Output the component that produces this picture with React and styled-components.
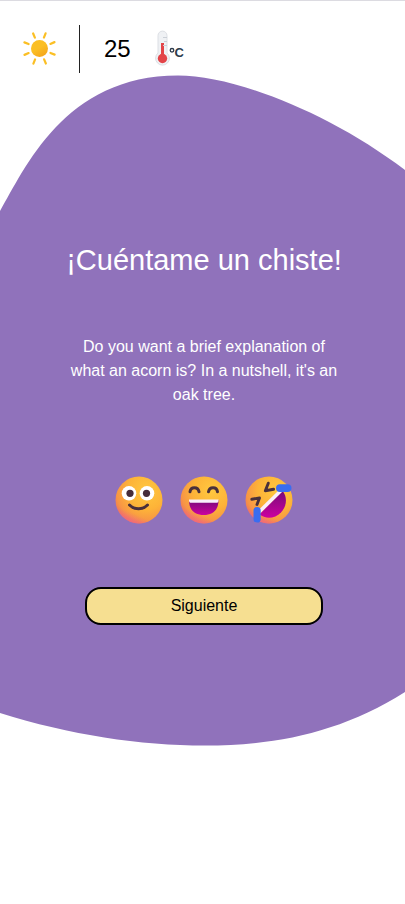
import React from "react";
import styled, { createGlobalStyle } from "styled-components";

const GlobalStyle = createGlobalStyle`
  *, *::before, *::after { box-sizing: border-box; }
  body {
    margin: 0;
    background: #fff;
    color: #000;
    font-family: "Liberation Sans", Arial, sans-serif;
    font-size: 16px;
    line-height: 24px;
  }
`;

const Page = styled.div`
  position: relative;
  min-height: 100vh;
  overflow: hidden;
  border-top: 1px solid #dcdbe1;
`;

const Blob = styled.svg`
  position: absolute;
  z-index: -1;
  top: 74px;
  left: 0;
  width: 100%;
  height: 671px;
`;

const Weather = styled.header`
  display: flex;
  align-items: center;
  height: 48px;
  margin-top: 24px;
  padding-left: 20px;
`;

const SunIcon = styled.svg`
  width: 40px;
  height: 40px;
`;

const Temperature = styled.p`
  display: flex;
  align-items: center;
  height: 100%;
  margin: 0 0 0 19px;
  padding-left: 24px;
  border-left: 1px solid #222;
  font-size: 24px;
`;

const ThermometerIcon = styled.svg`
  width: 40px;
  height: 40px;
  margin-left: 20px;
`;

const Degrees = styled.text`
  fill: #2c3b4d;
  font: bold 13px "Liberation Sans", Arial, sans-serif;
`;

const Joke = styled.main`
  display: flex;
  flex-direction: column;
  align-items: center;
  padding: 169px 64px 0 67px;
  text-align: center;
`;

const Title = styled.h1`
  margin: 0;
  color: #fff;
  font-size: 29px;
  font-weight: 400;
  line-height: 36px;
  white-space: nowrap;
`;

const JokeText = styled.p`
  margin: 57px 0 0;
  color: #fff;
  max-width: 272px;
`;

const Scores = styled.div`
  display: flex;
  gap: 17px;
  margin-top: 69px;
`;

const ScoreButton = styled.button`
  width: 48px;
  height: 48px;
  padding: 0;
  border: 0;
  background: none;
  cursor: pointer;

  svg { display: block; width: 100%; height: 100%; }
`;

const NextButton = styled.button`
  width: 238px;
  max-width: 100%;
  height: 38px;
  margin-top: 63px;
  padding: 0;
  border: 2px solid #000;
  border-radius: 16px;
  background: #f6df91;
  color: #000;
  font: inherit;
  cursor: pointer;
`;

const rays = [22, 67, 112, 157, 202, 247, 292, 337];

function Sun() {
  return (
    <SunIcon viewBox="0 0 40 40" role="img" aria-label="Soleado">
      <defs>
        <linearGradient id="sunFill" x1="0.2" y1="0" x2="0.8" y2="1">
          <stop offset="0.45" stopColor="#fbbf24" />
          <stop offset="1" stopColor="#f4a41a" />
        </linearGradient>
      </defs>
      <circle cx="19.5" cy="19.5" r="8.5" fill="url(#sunFill)" />
      <g stroke="#fbbf24" strokeWidth="2.2" strokeLinecap="round">
        {rays.map((angle) => (
          <path key={angle} d="M19.5 7.7V3.2" transform={`rotate(${angle} 19.5 19.5)`} />
        ))}
      </g>
    </SunIcon>
  );
}

function Thermometer() {
  return (
    <ThermometerIcon viewBox="0 0 40 40" role="img" aria-label="Grados Celsius">
      <path
        d="M7 24V6.600a4.500 4.500 0 0 1 9 0V24a6.900 6.900 0 1 1-9 0Z"
        fill="#eff1f4"
        stroke="#dcdfe4"
      />
      <circle cx="11.5" cy="29.5" r="4.7" fill="#e34448" />
      <path d="M11.5 14v15" stroke="#e34448" strokeWidth="3" />
      <path d="M12 8.500h4M13 12.500h3M12 16.500h4" stroke="#cbd0d7" />
      <circle cx="21" cy="21.300" r="1.8" fill="none" stroke="#2c3b4d" strokeWidth="1.3" />
      <Degrees x="23.500" y="27.500">C</Degrees>
    </ThermometerIcon>
  );
}

function Face({ id, children }) {
  return (
    <svg viewBox="0 0 48 48" aria-hidden="true">
      <defs>
        <radialGradient id={`${id}Face`} cx="0.66" cy="0.3" r="0.8">
          <stop offset="0" stopColor="#ffc83f" />
          <stop offset="0.5" stopColor="#fdb338" />
          <stop offset="0.8" stopColor="#f79645" />
          <stop offset="1" stopColor="#ec6d5c" />
        </radialGradient>
        <linearGradient id={`${id}Glow`} x1="0.5" y1="0.84" x2="0.42" y2="1.02">
          <stop offset="0" stopColor="#f2608c" stopOpacity="0" />
          <stop offset="1" stopColor="#f2608c" stopOpacity="0.7" />
        </linearGradient>
        <linearGradient id={`${id}Mouth`} x1="0" y1="0" x2="0" y2="1">
          <stop offset="0" stopColor="#780b79" />
          <stop offset="1" stopColor="#cc00a0" />
        </linearGradient>
      </defs>
      <circle cx="24" cy="24" r="23.5" fill={`url(#${id}Face)`} />
      <circle cx="24" cy="24" r="23.5" fill={`url(#${id}Glow)`} />
      {children}
    </svg>
  );
}

function Smile() {
  return (
    <Face id="smile">
      <circle cx="14" cy="17.3" r="7.3" fill="#fff" />
      <circle cx="32" cy="17.3" r="7.3" fill="#fff" />
      <circle cx="15" cy="17.3" r="3.6" fill="#462d3b" />
      <circle cx="31.500" cy="17.3" r="3.6" fill="#462d3b" />
      <path d="M14.500 29c4.8 5 13.200 5 18 0" fill="none" stroke="#49303b" strokeWidth="3" strokeLinecap="round" />
    </Face>
  );
}

function Laugh() {
  return (
    <Face id="laugh">
      <path
        d="M10 15.8c.8-5.400 8-5.400 9 0M28.5 15.8c1-5.400 8.200-5.400 9 0"
        fill="none"
        stroke="#49303b"
        strokeWidth="3"
        strokeLinecap="round"
      />
      <path d="M9 24h29.500c0 10-5.500 15-14.750 15S9 34 9 24Z" fill="url(#laughMouth)" />
      <path d="M9 23.500h29.500v1c0 1.600-.8 2.300-2 2.300H11c-1.200 0-2-.7-2-2.300Z" fill="#f8effb" />
    </Face>
  );
}

function Rolling() {
  return (
    <Face id="rolling">
      <path d="M37.500 15 14.500 38.300c6 5.200 15.500 4.500 21.500-1.800 6-6.300 6.500-16 1.500-21.500Z" fill="url(#rollingMouth)" />
      <path d="m38 15-23.500 23-3-2L34.500 13.500Z" fill="#f9effc" />
      <g fill="none" stroke="#49303b" strokeWidth="2.900" strokeLinecap="round" strokeLinejoin="round">
        <path d="m23.300 7.200-3 7.500 8.300-1.500" />
        <path d="m6.800 23.200 7.700-1.200-2.500 6.500" />
      </g>
      <rect x="31" y="8.200" width="15.500" height="7.800" rx="3.900" fill="#3a6df0" />
      <rect x="8.500" y="31" width="7.200" height="15.500" rx="3.600" fill="#3a6df0" />
    </Face>
  );
}

export default function App() {
  return (
    <>
      <GlobalStyle />
      <Page>
        <Blob viewBox="0 75 405 671" preserveAspectRatio="none" aria-hidden="true">
          <path
            d="M0 211C25 169 64 75.500 178 75.500C235 75.500 330 113 405 170V692C340 733 275 745.500 205 745.500C140 745.500 70 735 0 713Z"
            fill="#9072bb"
          />
        </Blob>
        <Weather>
          <Sun />
          <Temperature>25</Temperature>
          <Thermometer />
        </Weather>
        <Joke>
          <Title>¡Cuéntame un chiste!</Title>
          <JokeText>
            Do you want a brief explanation of what an acorn is? In a nutshell, it's an oak tree.
          </JokeText>
          <Scores>
            <ScoreButton type="button" aria-label="Un poco gracioso"><Smile /></ScoreButton>
            <ScoreButton type="button" aria-label="Gracioso"><Laugh /></ScoreButton>
            <ScoreButton type="button" aria-label="Muy gracioso"><Rolling /></ScoreButton>
          </Scores>
          <NextButton type="button">Siguiente</NextButton>
        </Joke>
      </Page>
    </>
  );
}
